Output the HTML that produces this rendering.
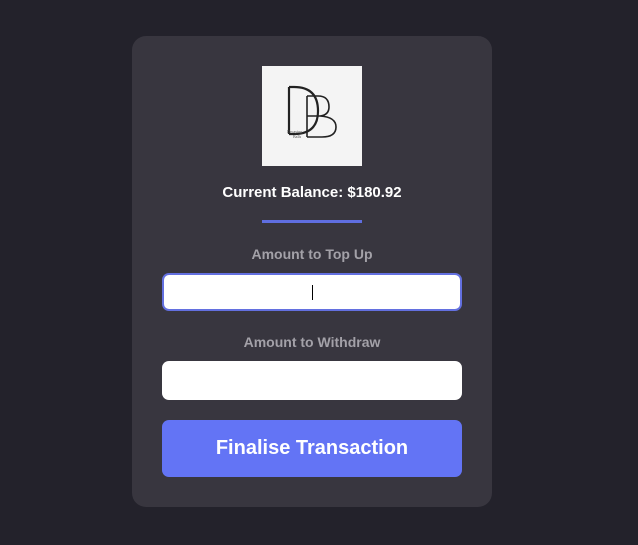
<!DOCTYPE html>
<html><head><style>
body{margin:0;width:638px;height:545px;background:#23222b;font-family:"Liberation Sans",sans-serif;position:relative;overflow:hidden}
.card{position:absolute;left:132px;top:36px;width:360px;height:471px;background:#38363f;border-radius:14px}
.logo{position:absolute;left:262px;top:66px;width:100px;height:100px;background:#f4f4f4}
.t{position:absolute;left:132px;width:360px;text-align:center;font-weight:bold}
.inp{position:absolute;left:162px;width:300px;background:#fff;border-radius:7px;box-sizing:border-box}
</style></head><body>
<div class="card"></div>
<div class="logo">
<svg width="100" height="100" viewBox="0 0 100 100">
<path d="M27 21 V68 M27 21 H32 Q56 21 56 45 Q56 68 32 68 H27" fill="none" stroke="#222" stroke-width="2.2"/>
<path d="M45 30 V71 M45 30 H56 Q67 30 67 41 Q67 49 58 50 Q74 51 74 61 Q74 71 60 71 H45 M45 50 H58" fill="none" stroke="#222" stroke-width="1.6"/>
<text x="25" y="67" font-size="4" fill="#555" font-family="Liberation Serif">Decaying</text>
<text x="31" y="72" font-size="4" fill="#555" font-family="Liberation Serif">Balls</text>
</svg></div>
<div class="t" style="top:184px;color:#fff;font-size:15px">Current Balance: $180.92</div>
<div style="position:absolute;left:262px;top:220px;width:100px;height:3px;background:#5f6ee0"></div>
<div class="t" style="top:246px;color:#a3a1a8;font-size:14px">Amount to Top Up</div>
<div class="inp" style="top:273px;height:38px;border:2px solid #6370e0"><div style="position:absolute;left:148px;top:10px;width:1px;height:15px;background:#000"></div></div>
<div class="t" style="top:334px;color:#a3a1a8;font-size:14px">Amount to Withdraw</div>
<div class="inp" style="top:361px;height:39px"></div>
<div style="position:absolute;left:162px;top:420px;width:300px;height:57px;background:#6374f5;border-radius:7px;color:#fff;font-weight:bold;font-size:20px;text-align:center;line-height:56px">Finalise Transaction</div>
</body></html>
